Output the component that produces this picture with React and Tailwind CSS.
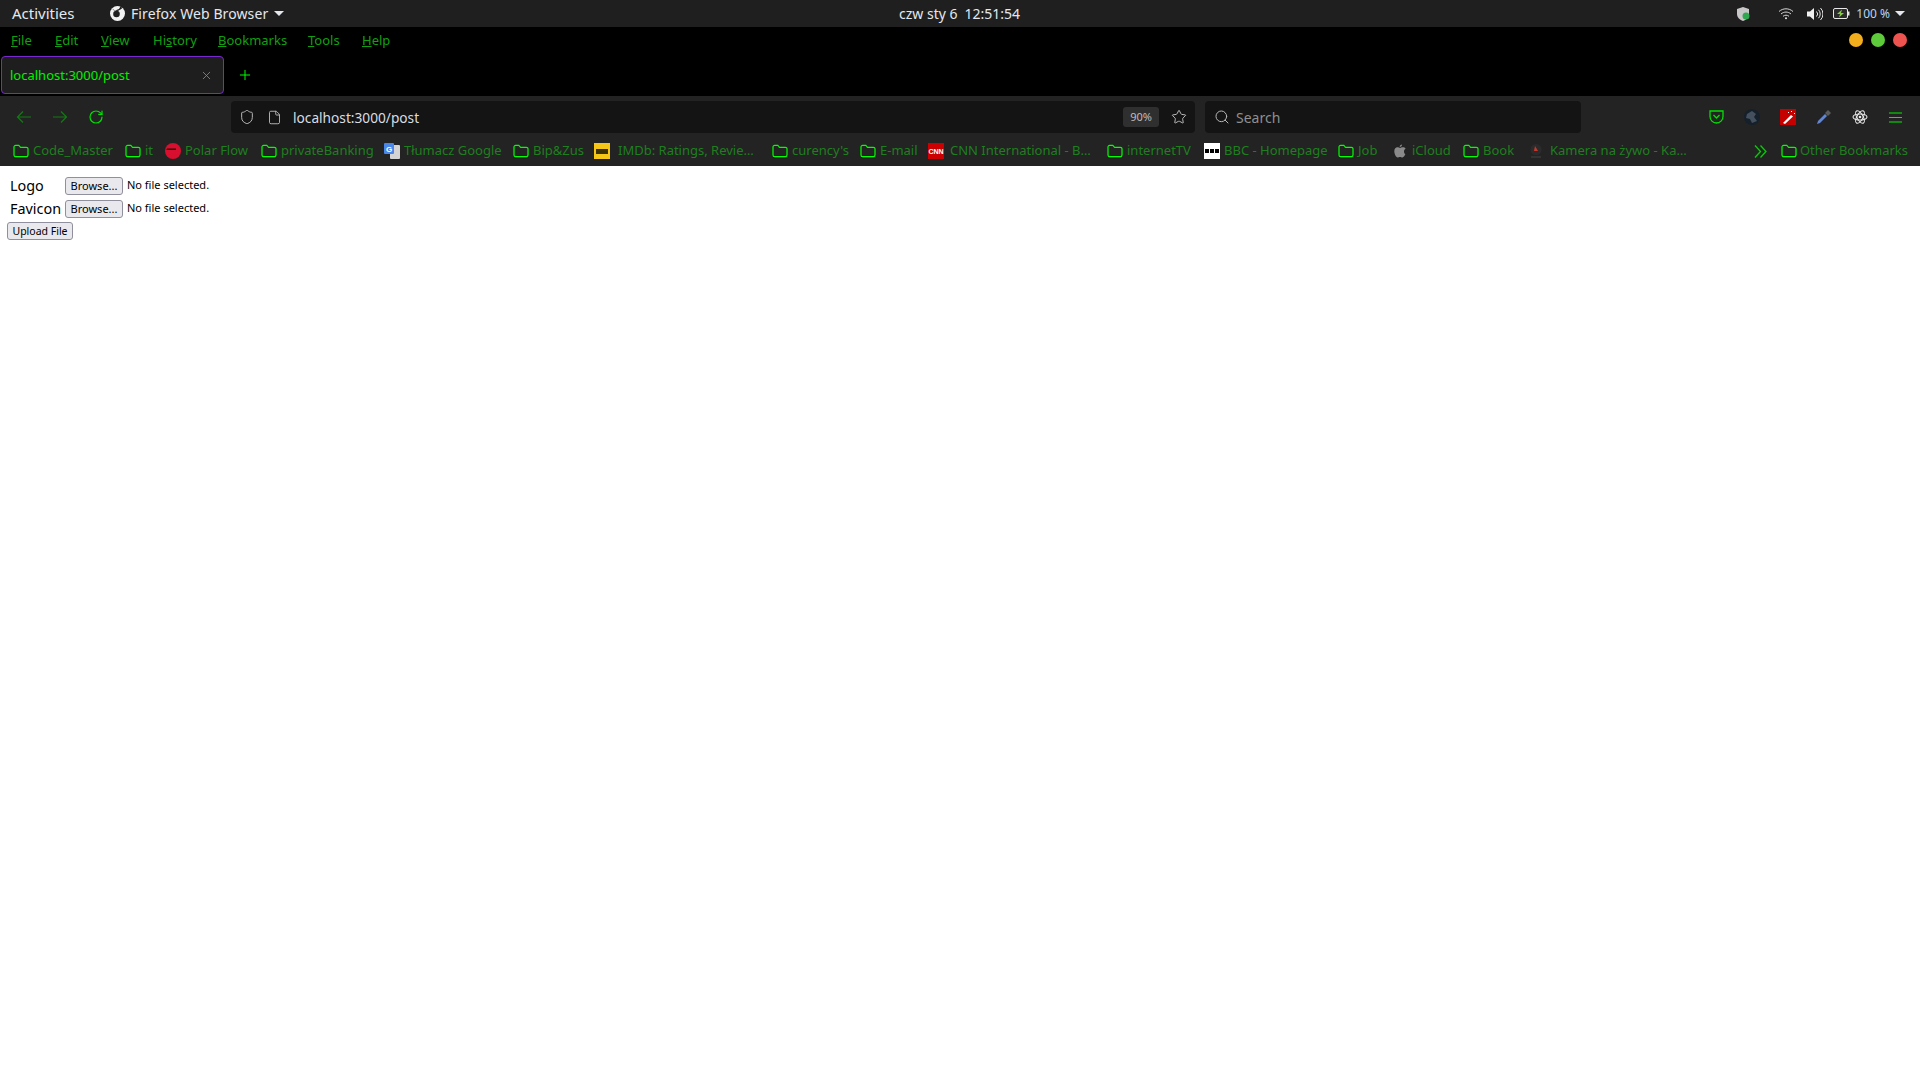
import { Plus, X, RotateCw, Shield, File, Star, Search } from 'lucide-react';

const FONT = 'font-["Noto_Sans",sans-serif]';

const FolderIcon = () => (
  <svg width="16" height="14" viewBox="0 0 16 14" fill="none" stroke="#00ff00" strokeWidth="1.2" className="shrink-0">
    <path d="M1 3a1.6 1.6 0 0 1 1.6-1.6h3.2l1.8 1.9h5.8A1.6 1.6 0 0 1 15 4.900V11a1.600 1.600 0 0 1-1.600 1.600H2.600A1.600 1.600 0 0 1 1 11z" />
  </svg>
);

const PolarIcon = () => (
  <svg width="16" height="16" viewBox="0 0 16 16" className="shrink-0">
    <circle cx="8" cy="8" r="8" fill="#d80f2e" />
    <path d="M2 5.500h9v1.500H1.400z" fill="#2a0a0e" />
  </svg>
);

const TranslateIcon = () => (
  <svg width="16" height="16" viewBox="0 0 16 16" className="shrink-0">
    <rect x="6" y="2" width="10" height="14" rx="1" fill="#d4d4d4" />
    <rect width="10" height="11" rx="1" fill="#4a86e8" />
    <text x="2" y="8.500" fontSize="8" fontWeight="700" fill="#fff" fontFamily="Liberation Sans">G</text>
  </svg>
);

const ImdbIcon = () => (
  <div className="w-4 h-4 bg-[#f5c518] flex items-center justify-center shrink-0">
    <div className="w-3 h-[5px] bg-[#3b3000]" />
  </div>
);

const CnnIcon = () => (
  <div className="w-4 h-4 bg-[#cc0000] flex items-center justify-center shrink-0 text-white text-[7px] font-bold leading-none font-['Liberation_Sans',sans-serif]">
    CNN
  </div>
);

const BbcIcon = () => (
  <div className="w-4 h-4 bg-white flex items-center justify-center gap-px shrink-0">
    <div className="w-1 h-1 bg-black" />
    <div className="w-1 h-1 bg-black" />
    <div className="w-1 h-1 bg-black" />
  </div>
);

const AppleIcon = () => (
  <svg width="12" height="14" viewBox="0 0 12 14" fill="#8a8a8a" className="shrink-0">
    <path d="M8 .5c.1 1.300-1 2.600-2.300 2.500C5.600 1.800 6.800.6 8 .5zM10 7.400c0-1.300.7-2.100 1.600-2.700-.6-.9-1.600-1.400-2.700-1.400-1.200-.1-2.100.7-2.800.7-.7 0-1.600-.7-2.700-.7C1.800 3.300.3 4.700.3 7.300c0 2.600 1.700 6.200 3.300 6.200.8 0 1.300-.6 2.400-.6s1.500.6 2.400.6c1.300 0 2.500-2 3-3.400-1.100-.5-1.400-1.700-1.400-2.700z" />
  </svg>
);

const KameraIcon = () => (
  <svg width="16" height="16" viewBox="0 0 16 16" className="shrink-0">
    <circle cx="8" cy="6.500" r="5.500" fill="#2b2b2b" />
    <path d="M7 3l3 5H6z" fill="#c9362c" />
    <rect x="3" y="13" width="10" height="2" fill="#333" />
  </svg>
);

const BOOKMARKS = [
  { label: 'Code_Master', icon: <FolderIcon />, width: 'w-[112px]' },
  { label: 'it', icon: <FolderIcon />, width: 'w-[40px]' },
  { label: 'Polar Flow', icon: <PolarIcon />, width: 'w-[96px]' },
  { label: 'privateBanking', icon: <FolderIcon />, width: 'w-[123px]' },
  { label: 'Tłumacz Google', icon: <TranslateIcon />, width: 'w-[129px]' },
  { label: 'Bip&Zus', icon: <FolderIcon />, width: 'w-[81px]' },
  { label: 'IMDb: Ratings, Revie…', icon: <ImdbIcon />, width: 'w-[178px]', gap: 'gap-2' },
  { label: "curency's", icon: <FolderIcon />, width: 'w-[88px]' },
  { label: 'E-mail', icon: <FolderIcon />, width: 'w-[68px]' },
  { label: 'CNN International - B…', icon: <CnnIcon />, width: 'w-[179px]', gap: 'gap-[6px]' },
  { label: 'internetTV', icon: <FolderIcon />, width: 'w-[97px]' },
  { label: 'BBC - Homepage', icon: <BbcIcon />, width: 'w-[134px]' },
  { label: 'Job', icon: <FolderIcon />, width: 'w-[56px]' },
  { label: 'iCloud', icon: <AppleIcon />, width: 'w-[69px]', gap: 'gap-[6px]' },
  { label: 'Book', icon: <FolderIcon />, width: 'w-[65px]' },
  { label: 'Kamera na żywo - Ka…', icon: <KameraIcon />, width: 'w-[226px]', gap: 'gap-[6px]' },
];

const MENU = [
  { key: 'F', rest: 'ile', width: 'w-[44px]' },
  { key: 'E', rest: 'dit', width: 'w-[46px]' },
  { key: 'V', rest: 'iew', width: 'w-[52px]' },
  { pre: 'Hi', key: 's', rest: 'tory', width: 'w-[65px]' },
  { key: 'B', rest: 'ookmarks', width: 'w-[90px]' },
  { key: 'T', rest: 'ools', width: 'w-[54px]' },
  { key: 'H', rest: 'elp', width: 'w-[50px]' },
];

const NavArrow = ({ flip }) => (
  <svg width="16" height="14" viewBox="0 0 16 14" fill="none" stroke="#127a12" strokeWidth="1.200" className={flip ? '-scale-x-100' : ''}>
    <path d="M1.500 7h13.500M7 1.500L1.500 7 7 12.500" />
  </svg>
);

const TopBar = () => (
  <div className="h-[27px] bg-[#1f1f1f] flex items-center text-[14px] text-[#e4e8ee] relative">
    <span className="ml-3 w-[97px] text-[15px]">Activities</span>
    <svg width="17" height="17" viewBox="0 0 17 17" className="shrink-0">
      <circle cx="8.500" cy="8.500" r="7.500" fill="#f2f2f2" />
      <circle cx="7.500" cy="9" r="3.300" fill="#1f1f1f" />
      <path d="M3 3.500l3 2 4-1.500 2-3.500 1 3-4 2.500-4-.5z" fill="#1f1f1f" />
    </svg>
    <span className="ml-[5px] tracking-[0.1px]">Firefox Web Browser</span>
    <div className="ml-[6px] w-0 h-0 border-x-[5px] border-x-transparent border-t-[5px] border-t-[#e4e8ee]" />
    <div className="absolute left-[899px] flex gap-[7px]">
      <span>czw sty 6</span>
      <span>12:51:54</span>
    </div>
    <div className="ml-auto flex items-center pr-[15px]">
      <svg width="14" height="16" viewBox="0 0 14 16">
        <path d="M7 1l6 2v5c0 3.500-3 6-6 7-3-1-6-3.500-6-7V3z" fill="#c8c8c8" />
        <circle cx="10" cy="10" r="3.500" fill="#2fa84f" />
      </svg>
      <svg width="16" height="13" viewBox="0 0 16 13" fill="none" stroke="#d8d8d8" strokeWidth="1" className="ml-7">
        <path d="M1 4.500c4-3.600 10-3.600 14 0M3 7c3-2.600 7-2.600 10 0M5 9.300c1.800-1.500 4.200-1.500 6 0" />
        <circle cx="8" cy="11.300" r="1" fill="#e8e8e8" stroke="none" />
      </svg>
      <svg width="17" height="14" viewBox="0 0 17 14" fill="none" stroke="#e8e8e8" strokeWidth="1" className="ml-3">
        <path d="M1 4.500h3L8 1v12L4 9.500H1z" fill="#f0f0f0" stroke="none" />
        <path d="M10.500 4.500a3.500 3.500 0 0 1 0 5M12.500 2.800a6 6 0 0 1 0 8.400M14.500 1a8.500 8.500 0 0 1 0 12" />
      </svg>
      <svg width="17" height="11" viewBox="0 0 17 11" className="ml-[10px]">
        <rect x=".5" y=".5" width="14" height="10" rx="1.500" fill="#2b2b2b" stroke="#e8e8e8" />
        <rect x="15" y="3.500" width="1.500" height="4" fill="#e8e8e8" />
        <path d="M9 1.500L4 6h3l-1 3.500L11 5H8z" fill="#7fd03a" />
      </svg>
      <span className="ml-[6px] text-[12px] text-[#bcd4f0]">100 %</span>
      <div className="ml-[5px] w-0 h-0 border-x-[5px] border-x-transparent border-t-[5px] border-t-[#e4e8ee]" />
    </div>
  </div>
);

const MenuBar = () => (
  <div className="h-[29px] bg-black flex items-center pl-[11px] pb-px text-[13px] text-[#12a012]">
    {MENU.map((m) => (
      <span key={m.key + m.rest} className={m.width}>
        {m.pre}
        <u>{m.key}</u>
        {m.rest}
      </span>
    ))}
    <div className="ml-auto flex gap-2 pr-[13px] mb-[2px]">
      <div className="w-[14px] h-[14px] rounded-full bg-[#f2ae1c]" />
      <div className="w-[14px] h-[14px] rounded-full bg-[#5dcb3a]" />
      <div className="w-[14px] h-[14px] rounded-full bg-[#ef5350]" />
    </div>
  </div>
);

const TabBar = () => (
  <div className="h-10 bg-black flex items-start">
    <div className="ml-px w-[223px] h-[38px] rounded-[4px] border border-[#7a28d0] bg-[#1e1e1e] flex items-center pl-2 pr-[10px] text-[13px] text-[#00f000]">
      <span className="mt-[2px]">localhost:3000/post</span>
      <X size={13} strokeWidth={1.500} className="ml-auto" />
    </div>
    <Plus size={16} color="#00ff00" strokeWidth={1.500} className="ml-[13px] mt-[11px]" />
  </div>
);

const NavBar = () => (
  <div className="h-[37px] bg-[#232323] flex pt-[5px]">
    <div className="flex items-center h-8 pl-[16px] w-[231px] shrink-0">
      <NavArrow />
      <div className="ml-5">
        <NavArrow flip />
      </div>
      <RotateCw size={16} color="#00e000" strokeWidth={1.800} className="ml-[20px]" />
    </div>
    <div className="w-[964px] h-8 rounded-[4px] bg-[#141414] flex items-center pl-2 pr-2 text-[13.700px] text-[#d8dde4]">
      <Shield size={16} color="#b8b8b8" strokeWidth={1.500} />
      <File size={15} color="#b8b8b8" strokeWidth={1.500} className="ml-3" />
      <span className="ml-[11px] mt-[2px]">localhost:3000/post</span>
      <div className="ml-auto w-9 h-5 rounded-[3px] bg-[#2f2f2f] flex items-center justify-center text-[11px] text-[#bdbdbd]">
        90%
      </div>
      <Star size={16} color="#b8b8b8" strokeWidth={1.500} className="ml-3" />
    </div>
    <div className="ml-[10px] w-[376px] h-8 rounded-[4px] bg-[#141414] flex items-center pl-[9px] text-[14px] text-[#8f8f8f]">
      <Search size={16} color="#b8b8b8" strokeWidth={1.500} />
      <span className="ml-[6px]">Search</span>
    </div>
    <div className="flex items-center h-8 ml-[128px]">
      <svg width="15" height="14" viewBox="0 0 15 14" fill="none" stroke="#00e000" strokeWidth="1.300">
        <path d="M1 1h13v5.500a6.500 6.500 0 0 1-13 0z" />
        <path d="M4.500 5l3 3 3-3" />
      </svg>
      <svg width="16" height="16" viewBox="0 0 16 16" className="ml-[20px]">
        <circle cx="8" cy="8" r="8" fill="#15202b" />
        <path d="M3 5l5-3 4 3-2 3 3 4-5 2-2-4-4-1z" fill="#44505e" />
      </svg>
      <svg width="16" height="16" viewBox="0 0 16 16" className="ml-[20px]">
        <rect width="16" height="16" fill="#c40000" />
        <path d="M3 14l8-8 2 1.500L5 15z" fill="#fff" />
        <path d="M11 2h1v1h-1zM14 4h1v1h-1zM8 3h1v1H8z" fill="#fff" />
      </svg>
      <svg width="16" height="16" viewBox="0 0 16 16" className="ml-[20px]">
        <path d="M1 15l1-3 7-7 2 2-7 7z" fill="#5f86d8" />
        <path d="M9 4l3-3 3 3-3 3z" fill="#5c5c5c" />
      </svg>
      <svg width="16" height="16" viewBox="-8 -8 16 16" fill="none" stroke="#e8e8e8" strokeWidth="1.100" className="ml-[20px]">
        <ellipse rx="7" ry="3" />
        <ellipse rx="7" ry="3" transform="rotate(60)" />
        <ellipse rx="7" ry="3" transform="rotate(120)" />
        <circle r="1.300" fill="#e8e8e8" stroke="none" />
      </svg>
      <svg width="13" height="11" viewBox="0 0 13 11" stroke="#00f000" strokeWidth="1.200" className="ml-[21px]">
        <path d="M0 1h13M0 5.500h13M0 10h13" />
      </svg>
    </div>
  </div>
);

const BookmarkBar = () => (
  <div className="h-[33px] bg-[#232323] flex items-center pl-[13px] pt-[3px] text-[13px] text-[#1f7f1f] whitespace-nowrap">
    {BOOKMARKS.map((b) => (
      <div key={b.label} className={`flex items-center shrink-0 ${b.width} ${b.gap || 'gap-1'}`}>
        {b.icon}
        <span>{b.label}</span>
      </div>
    ))}
    <svg width="13" height="13" viewBox="0 0 13 13" fill="none" stroke="#00d000" strokeWidth="1.300" className="shrink-0">
      <path d="M1 .5l5.500 6L1 12.500M6.500 .5l5.500 6-5.500 6" />
    </svg>
    <div className="ml-auto flex items-center gap-[3px] pr-3">
      <FolderIcon />
      <span>Other Bookmarks</span>
    </div>
  </div>
);

const FileRow = ({ label }) => (
  <div className="flex items-center h-[23px]">
    <label className="w-[55px] text-[14.400px] text-black">{label}</label>
    <button className="w-[58px] h-[18px] rounded-[3px] border border-[#8f8f9d] bg-[#e9e9ed] text-[11px] leading-none text-black">
      Browse...
    </button>
    <span className="ml-1 text-[11px] text-black">No file selected.</span>
  </div>
);

const App = () => (
  <div className={`min-h-[1080px] bg-white ${FONT}`}>
    <TopBar />
    <MenuBar />
    <TabBar />
    <NavBar />
    <BookmarkBar />
    <div className="pl-[10px] pt-2">
      <FileRow label="Logo" />
      <FileRow label="Favicon" />
      <button className="-ml-[3px] mt-[2px] block w-[66px] h-[18px] rounded-[3px] border border-[#8f8f9d] bg-[#e9e9ed] text-[10.500px] leading-none text-black">
        Upload File
      </button>
    </div>
  </div>
);

export default App;
